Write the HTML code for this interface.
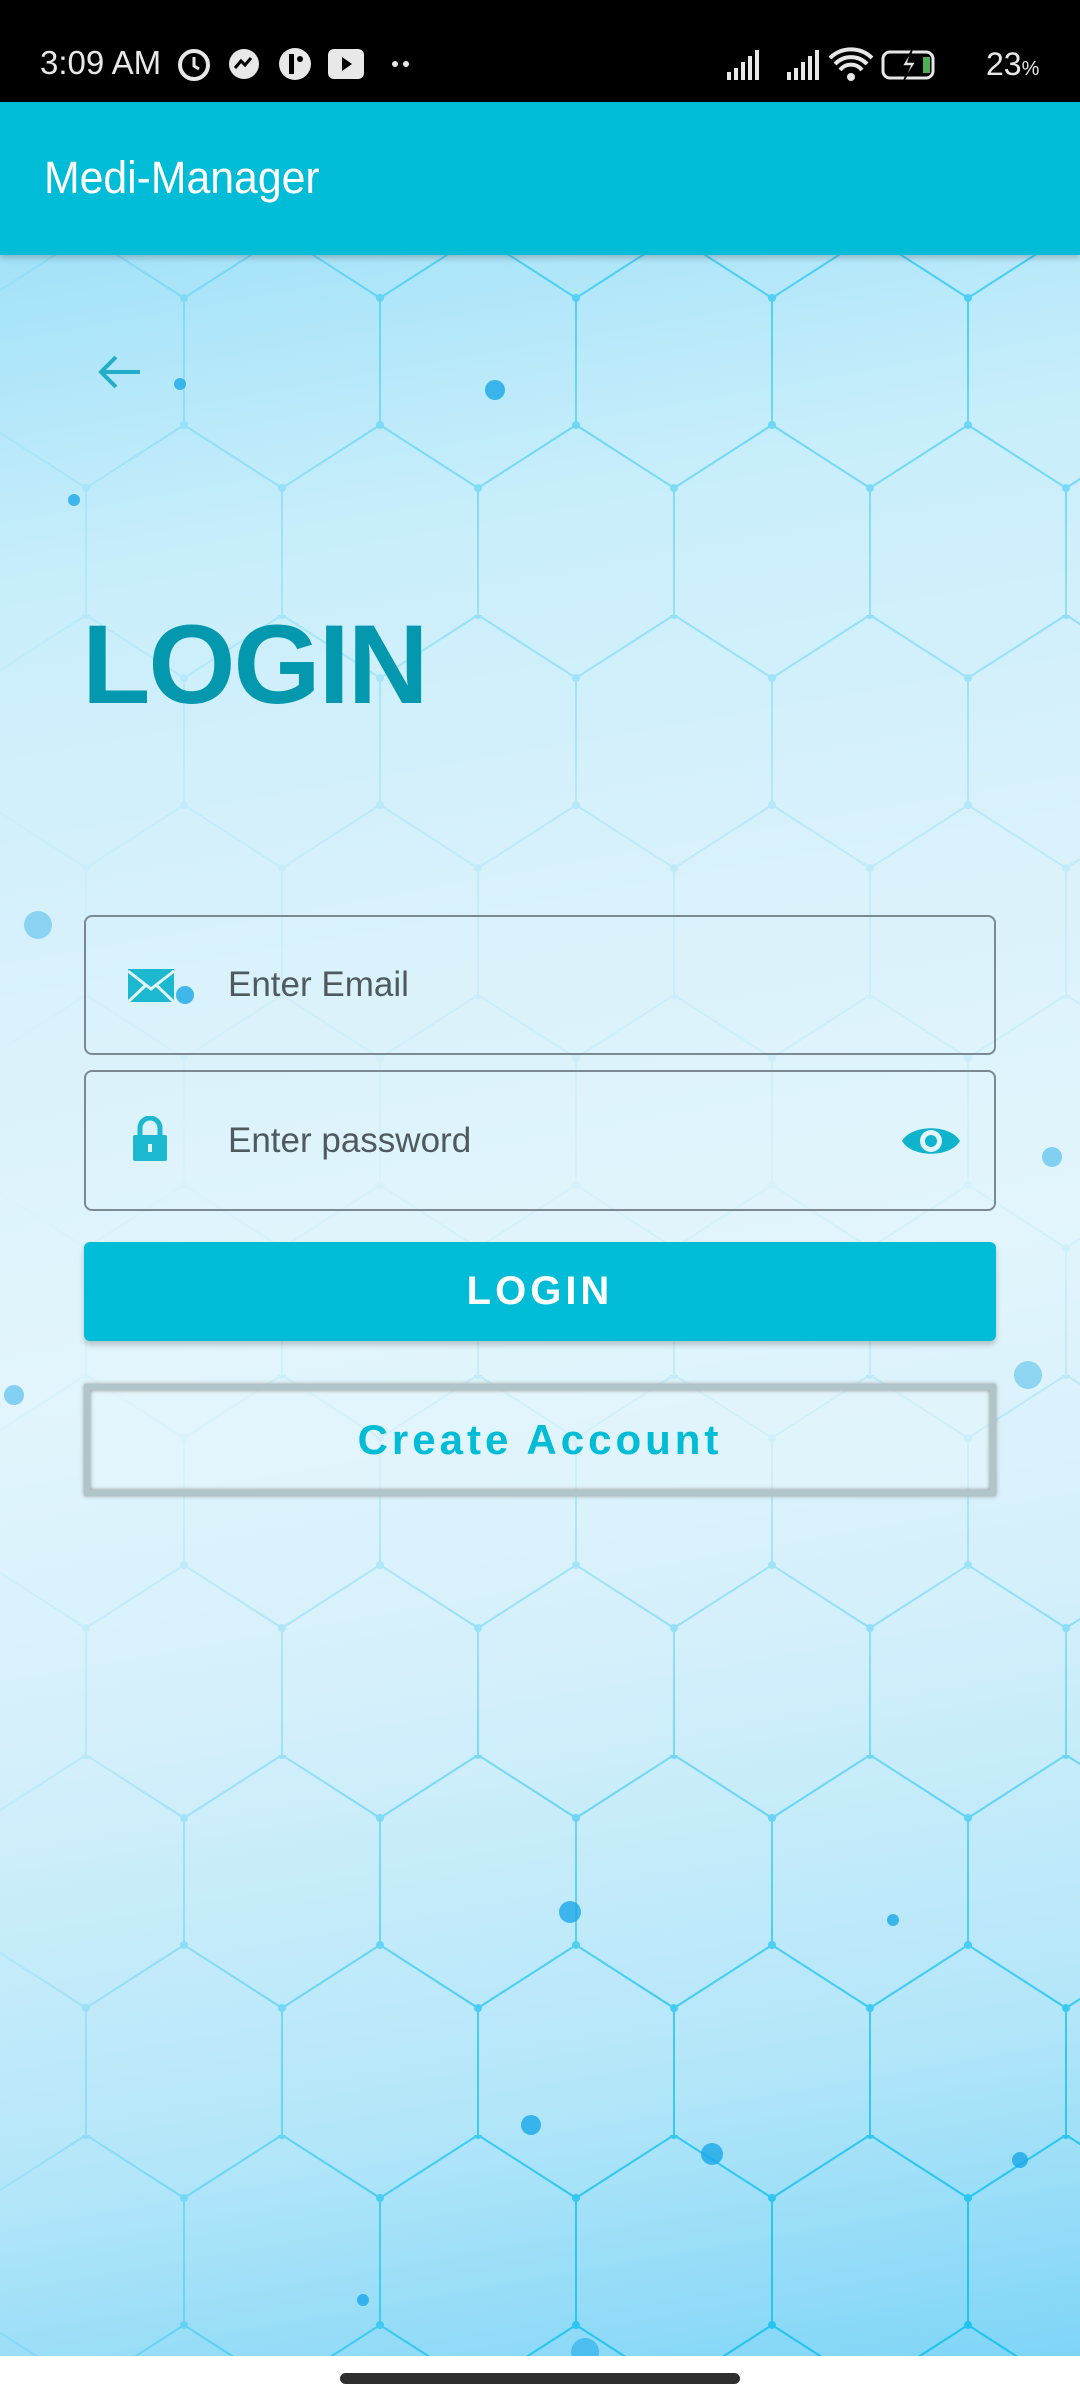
<!DOCTYPE html>
<html><head><meta charset="utf-8"><style>
html,body{margin:0;padding:0;width:1080px;height:2400px;overflow:hidden;background:#fff;font-family:"Liberation Sans",sans-serif}
.status{position:absolute;left:0;top:0;width:1080px;height:102px;background:#000;color:#e8e8e8}
.appbar{position:absolute;left:0;top:102px;width:1080px;height:153px;background:#00bcd6;box-shadow:0 3px 6px rgba(0,0,0,.2);z-index:3}
.appbar span{position:absolute;left:44px;top:50px;font-size:45px;color:#fff;transform:scaleX(.95);transform-origin:left}
.bg{position:absolute;left:0;top:255px;width:1080px;height:2101px;background:linear-gradient(170deg,#a3e2f8 0%,#c9eefb 15%,#dbf2fb 35%,#e2f5fc 50%,#d5f0fb 65%,#b3e6f9 85%,#7fd5f7 100%)}
.nav{position:absolute;left:0;top:2356px;width:1080px;height:44px;background:#fff}
.handle{position:absolute;left:340px;top:2373px;width:400px;height:11px;border-radius:6px;background:#2e2e2e}
.title{position:absolute;left:82px;top:600px;font-size:112px;font-weight:bold;color:#0398ae;letter-spacing:-2px}
.field{position:absolute;left:84px;width:912px;border:2.5px solid #7a8a90;border-radius:8px;box-sizing:border-box}
.field span{position:absolute;left:142px;top:50%;transform:translateY(-50%);font-size:35px;color:#4f5a5e}
.btn{position:absolute;left:84px;top:1242px;width:912px;height:99px;background:#00bcd6;border-radius:6px;box-shadow:0 4px 6px rgba(0,0,0,.2);color:#fff;font-size:40px;letter-spacing:4px;text-align:center;line-height:99px;font-weight:bold}
.ca{position:absolute;left:84px;top:1384px;width:912px;height:112px;box-sizing:border-box;border:6px solid #b0c4ca;box-shadow:inset 0 0 4px #888,0 0 4px #999;color:#00bcd6;font-size:42px;font-weight:bold;letter-spacing:4px;text-align:center;line-height:100px;background:rgba(230,246,252,.5)}
</style></head><body>
<div class="status">
 <div style="position:absolute;left:40px;top:44px;font-size:33px">3:09 AM</div>
 <svg style="position:absolute;left:170px;top:44px" width="240" height="40">
  <circle cx="24" cy="21" r="14" fill="none" stroke="#e8e8e8" stroke-width="4"/><path d="M24 13v9l5 3" stroke="#e8e8e8" stroke-width="3" fill="none"/>
  <circle cx="74" cy="20" r="15" fill="#e8e8e8"/><path d="M65 24l6-7 4 4 6-7" stroke="#000" stroke-width="3" fill="none"/>
  <circle cx="125" cy="20" r="16" fill="#e8e8e8"/><rect x="119" y="10" width="5" height="20" fill="#000"/><circle cx="130" cy="15" r="3" fill="#000"/>
  <rect x="158" y="5" width="36" height="30" rx="6" fill="#e8e8e8"/><path d="M172 13v14l10-7z" fill="#000"/>
  <circle cx="225" cy="20" r="3" fill="#e8e8e8"/><circle cx="236" cy="20" r="3" fill="#e8e8e8"/>
 </svg>
 <svg style="position:absolute;left:720px;top:44px" width="330" height="40">
  <g fill="#e8e8e8"><rect x="7" y="28" width="4" height="8"/><rect x="14" y="24" width="4" height="12"/><rect x="21" y="18" width="4" height="18"/><rect x="28" y="12" width="4" height="24"/><rect x="35" y="6" width="4" height="30"/>
  <rect x="67" y="28" width="4" height="8"/><rect x="74" y="24" width="4" height="12"/><rect x="81" y="18" width="4" height="18"/><rect x="88" y="12" width="4" height="24"/><rect x="95" y="6" width="4" height="30"/></g>
  <path d="M110 14a30 30 0 0 1 42 0M115 20a22 22 0 0 1 32 0M120 26a14 14 0 0 1 22 0" stroke="#e8e8e8" stroke-width="4" fill="none"/><circle cx="131" cy="33" r="4" fill="#e8e8e8"/>
  <rect x="163" y="8" width="50" height="26" rx="7" fill="none" stroke="#e8e8e8" stroke-width="3"/><rect x="203" y="13" width="7" height="16" fill="#4caf50"/><path d="M192 6l-10 16h8l-6 14 12-18h-8z" fill="#e8e8e8" stroke="#000" stroke-width="1.5"/>
 </svg>
 <div style="position:absolute;left:986px;top:46px;font-size:32px">23<span style="font-size:20px">%</span></div>
</div>
<div class="appbar"><span>Medi-Manager</span></div>
<div class="bg">
<svg width="1080" height="2101" style="position:absolute;left:0;top:0">
 <defs>
  <pattern id="h" width="196" height="380" patternUnits="userSpaceOnUse" x="-12" y="-20">
   <path d="M98 0L0 63M98 0L196 63M0 63V190M196 63V190M0 190L98 253M196 190L98 253M98 253V380" stroke="#1ec3ef" stroke-width="2" fill="none"/>
   <circle cx="98" cy="0" r="4" fill="#1ec3ef"/><circle cx="0" cy="63" r="4" fill="#1ec3ef"/><circle cx="196" cy="63" r="4" fill="#1ec3ef"/><circle cx="0" cy="190" r="4" fill="#1ec3ef"/><circle cx="196" cy="190" r="4" fill="#1ec3ef"/><circle cx="98" cy="253" r="4" fill="#1ec3ef"/>
  </pattern>
  <linearGradient id="g" x1="0" y1="0" x2="0" y2="1">
   <stop offset="0" stop-color="#fff" stop-opacity=".75"/><stop offset=".12" stop-color="#fff" stop-opacity=".45"/><stop offset=".3" stop-color="#fff" stop-opacity=".12"/><stop offset=".45" stop-color="#fff" stop-opacity=".05"/><stop offset=".6" stop-color="#fff" stop-opacity=".25"/><stop offset=".85" stop-color="#fff" stop-opacity=".85"/><stop offset="1" stop-color="#fff" stop-opacity="1"/>
  </linearGradient>
  <linearGradient id="g2" x1="0" y1="0" x2="1" y2="0"><stop offset="0" stop-color="#fff" stop-opacity=".15"/><stop offset=".45" stop-color="#fff" stop-opacity=".9"/><stop offset="1" stop-color="#fff" stop-opacity="1"/></linearGradient>
  <mask id="m"><rect width="1080" height="2101" fill="url(#g)"/></mask>
  <mask id="m2"><rect width="1080" height="2101" fill="url(#g2)"/></mask>
 </defs>
 <g mask="url(#m)"><g mask="url(#m2)"><rect width="1080" height="2101" fill="url(#h)"/>
 <rect x="50" y="40" width="1080" height="2101" fill="url(#h)" opacity=".3"/></g></g>
 <g fill="#1aa8e8" opacity=".8"><circle cx="495" cy="135" r="10"/><circle cx="180" cy="129" r="6"/><circle cx="74" cy="245" r="6"/><circle cx="38" cy="670" r="14" opacity=".5"/><circle cx="185" cy="740" r="9"/><circle cx="1052" cy="902" r="10" opacity=".6"/><circle cx="1028" cy="1120" r="14" opacity=".5"/><circle cx="570" cy="1657" r="11"/><circle cx="712" cy="1899" r="11"/><circle cx="531" cy="1870" r="10"/><circle cx="585" cy="2097" r="14" opacity=".7"/><circle cx="893" cy="1665" r="6"/><circle cx="1020" cy="1905" r="8"/><circle cx="363" cy="2045" r="6"/><circle cx="14" cy="1140" r="10" opacity=".6"/></g>
</svg>
</div>
<svg style="position:absolute;left:94px;top:352px" width="50" height="40"><path d="M46 20H8M22 5L7 20l15 15" stroke="#22aec8" stroke-width="4" fill="none"/></svg>
<div class="title">LOGIN</div>
<div class="field" style="top:915px;height:140px">
 <svg style="position:absolute;left:42px;top:52px" width="48" height="34"><rect width="46" height="33" fill="#1bb8d0"/><path d="M0 2L23 20L46 2M0 33L18 16M46 33L28 16" stroke="#e3f5fc" stroke-width="3" fill="none"/></svg>
 <span>Enter Email</span>
</div>
<div class="field" style="top:1070px;height:141px">
 <svg style="position:absolute;left:46px;top:44px" width="36" height="46"><path d="M8 20v-8a10 10 0 0 1 20 0v8" stroke="#1bb8d0" stroke-width="5" fill="none"/><rect x="1" y="19" width="34" height="26" rx="2" fill="#1bb8d0"/><rect x="16" y="28" width="4" height="8" fill="#e3f5fc"/></svg>
 <span>Enter password</span>
 <svg style="position:absolute;left:814px;top:48px" width="62" height="42"><path d="M2 21C12 4 50 4 60 21C50 38 12 38 2 21Z" fill="#0fb3cc"/><circle cx="31" cy="21" r="11" fill="#e3f5fc"/><circle cx="31" cy="21" r="6" fill="#0fb3cc"/></svg>
</div>
<div class="btn">LOGIN</div>
<div class="ca">Create Account</div>
<div class="nav"></div><div class="handle"></div>
</body></html>
